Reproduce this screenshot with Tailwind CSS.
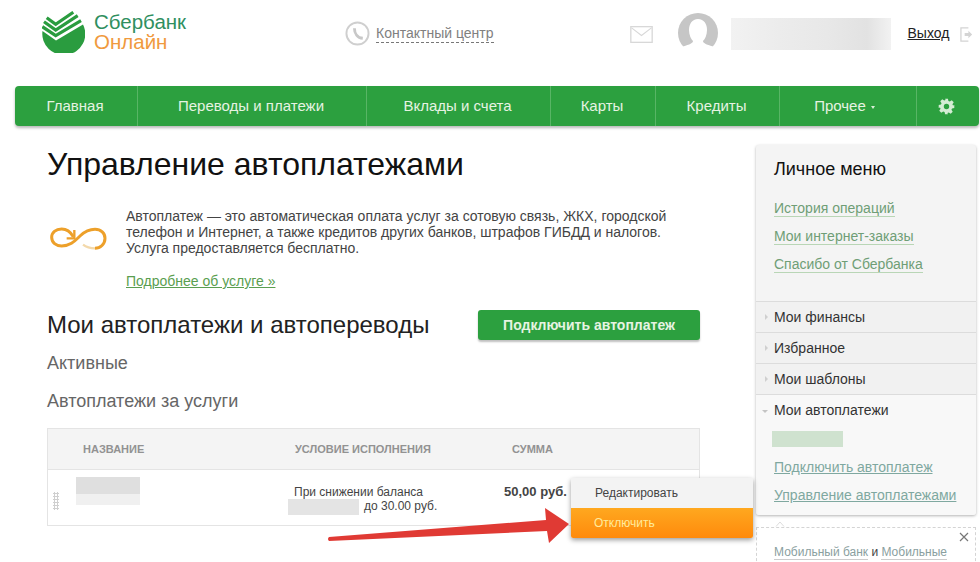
<!DOCTYPE html>
<html lang="ru"><head><meta charset="utf-8"><script src="https://cdn.jsdelivr.net/npm/@tailwindcss/browser@4"></script></head>
<body class="bg-white overflow-hidden font-['Liberation_Sans',sans-serif]">
<div class="relative w-[980px] h-[562px] overflow-hidden">
  <header class="h-[86px] flex items-start">
    <div class="w-[43px] h-[42px] ml-[42px] mt-[11px] shrink-0">
      <svg viewBox="0 0 43 42" class="w-[43px] h-[42px]">
        <path d="M0.5 20 L14 29.5 L41 13.5 A21.5 21 0 1 1 0.5 20 Z" fill="#2a9c3f"/>
        <path d="M4.7 6.7 L13.7 13.3 L31.3 1.3" fill="none" stroke="#2a9c3f" stroke-width="3.2"/>
        <path d="M2 10.7 L13.7 19 L35.7 4.7" fill="none" stroke="#2a9c3f" stroke-width="3.2"/>
        <path d="M0.3 15.7 L13.7 24.7 L39 9.7" fill="none" stroke="#2a9c3f" stroke-width="3.2"/>
      </svg>
    </div>
    <div class="ml-[9px] mt-[12px] w-[100px] text-[20.5px] leading-[19.5px] shrink-0">
      <div class="text-[#2f8f5f]">Сбербанк</div><div class="text-[#f09a3e]">Онлайн</div>
    </div>
    <svg viewBox="0 0 26 26" class="w-[25px] h-[25px] ml-[151px] mt-[21px] shrink-0"><circle cx="13" cy="13" r="11.5" fill="none" stroke="#cfcfcf" stroke-width="2"/><path d="M9.8 7.5 C9.8 13 13 17.5 18.5 18" fill="none" stroke="#c8c8c8" stroke-width="3"/></svg>
    <a class="ml-[6px] mt-[25px] text-[14px] leading-[17px] text-[#808080] border-b border-dashed border-[#777] shrink-0">Контактный центр</a>
    <svg viewBox="0 0 24 18" class="w-[23px] h-[17px] ml-[136px] mt-[26px] shrink-0"><rect x="0.7" y="0.7" width="22.6" height="16.6" fill="none" stroke="#d8d8d8" stroke-width="1.4"/><path d="M1.5 2 L12 10 L22.5 2" fill="none" stroke="#d8d8d8" stroke-width="1.2"/></svg>
    <svg viewBox="0 0 40 40" class="w-[40px] h-[40px] ml-[25px] mt-[13px] shrink-0"><circle cx="20" cy="20" r="20" fill="#c6c6c6"/><path d="M20 6 C26 6 29 11 29 17 C29 22 27 26 25 28 C25 30 28 31.5 35 33.5 L35 42 L5 42 L5 33.5 C12 31.5 15 30 15 28 C13 26 11 22 11 17 C11 11 14 6 20 6 Z" fill="#fff"/></svg>
    <div class="w-[160px] h-[32px] ml-[13px] mt-[18px] bg-[linear-gradient(90deg,#f2f2f2,#ececec_30%,#e8e8e8_60%,#e2e2e2_85%,#f2f2f2)] shrink-0"></div>
    <a class="ml-[17px] mt-[25px] text-[14px] leading-[16px] text-[#222] underline shrink-0">Выход</a>
    <svg viewBox="0 0 15 16" class="w-[14px] h-[15px] ml-[11px] mt-[27px] shrink-0"><path d="M9 1 H1 V15 H9" fill="none" stroke="#d4d4d4" stroke-width="1.4"/><path d="M5 6.5 H9 V4 L13 8 L9 12 V9.5 H5 Z" fill="#d4d4d4"/></svg>
  </header>

  <nav class="ml-[15px] w-[964px] h-[40px] flex rounded-[4px] bg-[#2ca03f] text-[15px] text-[#e6f3e2] shadow-[0_2px_3px_rgba(0,0,0,0.28)] leading-[39px] text-center">
    <div class="w-[123px] border-r border-[#58b565] pr-[2px]">Главная</div>
    <div class="w-[229px] border-r border-[#58b565] pr-[2px]">Переводы и платежи</div>
    <div class="w-[184px] border-r border-[#58b565] pr-[2px]">Вклады и счета</div>
    <div class="w-[105px] border-r border-[#58b565] pr-[2px]">Карты</div>
    <div class="w-[124px] border-r border-[#58b565] pr-[2px]">Кредиты</div>
    <div class="w-[137px] border-r border-[#58b565] flex items-center justify-center gap-[5px] pr-[7px]"><span class="leading-[38px]">Прочее</span><span class="w-0 h-0 mt-[2px] border-x-[2.5px] border-t-[3px] border-x-transparent border-t-[#d8eed8]"></span></div>
    <div class="flex-1 flex items-center justify-center pr-[4px]">
      <svg viewBox="0 0 24 24" class="w-[17px] h-[17px]"><path fill="#d4edd4" fill-rule="evenodd" d="M10 1h4l.7 3.2 1.9.8 2.8-1.8 2.8 2.8-1.8 2.8.8 1.9L23 10v4l-3.2.7-.8 1.9 1.8 2.8-2.8 2.8-2.8-1.8-1.9.8L14 23h-4l-.7-3.2-1.9-.8-2.8 1.8-2.8-2.8 1.8-2.8-.8-1.9L1 14v-4l3.2-.7.8-1.9-1.8-2.8 2.8-2.8 2.8 1.8 1.9-.8zM12 8.2a3.8 3.8 0 1 0 0 7.6 3.8 3.8 0 0 0 0-7.6z"/></svg>
    </div>
  </nav>

  <div class="flex mt-[20px]">
    <main class="ml-[47px] w-[653px] shrink-0">
      <h1 class="text-[32px] leading-[36px] text-[#111]">Управление автоплатежами</h1>
      <div class="flex mt-[23px]">
        <svg viewBox="0 0 198 120" class="w-[66px] h-[40px] ml-[-2px] mt-[15px] shrink-0">
          <path d="M85 50 C75 33 62 27 50 27 C32 27 20 38 20 52 C20 68 33 78 50 78 C78 78 92 60 105 48 C118 36 132 28 150 28 C168 28 180 40 180 55 C180 72 166 85 150 85" fill="none" stroke="#eda02a" stroke-width="9"/>
          <path d="M150 85 C135 85 122 80 114 74" fill="none" stroke="#f3d9ab" stroke-width="7"/>
          <path d="M88 30 V55 H65" fill="none" stroke="#eda02a" stroke-width="7"/>
        </svg>
        <div class="ml-[15px] pt-[3px]">
          <p class="w-[560px] text-[14px] leading-[16px] text-[#444] whitespace-nowrap">Автоплатеж — это автоматическая оплата услуг за сотовую связь, ЖКХ, городской<br>телефон и Интернет, а также кредитов других банков, штрафов ГИБДД и налогов.<br>Услуга предоставляется бесплатно.</p>
          <a class="block mt-[17px] text-[14px] leading-[16px] text-[#5a9e50] underline">Подробнее об услуге »</a>
        </div>
      </div>
      <div class="flex items-start justify-between mt-[19px]">
        <h2 class="text-[24px] leading-[30px] text-[#222] mt-[2px]">Мои автоплатежи и автопереводы</h2>
        <button class="w-[222px] h-[30px] mt-[2px] rounded-[3px] bg-[#2ca03f] text-[14px] font-bold text-[#e6f3e2] shadow-[0_2px_2px_rgba(0,0,0,0.25)]">Подключить автоплатеж</button>
      </div>
      <div class="text-[18px] leading-[22px] text-[#666] mt-[12px]">Активные</div>
      <div class="text-[18px] leading-[22px] text-[#666] mt-[16px]">Автоплатежи за услуги</div>
      <div class="mt-[16px] border border-[#e4e4e4]">
        <div class="h-[41px] bg-[#f4f4f4] border-b border-[#e4e4e4] flex items-center text-[11px] font-bold text-[#929292]">
          <span class="ml-[35px] w-[212px]">НАЗВАНИЕ</span><span class="w-[217px]">УСЛОВИЕ ИСПОЛНЕНИЯ</span><span>СУММА</span>
        </div>
        <div class="h-[55px] flex relative">
          <div class="w-[6px] h-[18px] ml-[5px] mt-[22px] bg-[radial-gradient(#cfcfcf_1px,transparent_1.2px)] bg-[length:3px_3px] shrink-0"></div>
          <div class="w-[64px] h-[28px] ml-[17px] mt-[7px] bg-[linear-gradient(#dfdfdf_60%,#f0f0f0_60%)] shrink-0"></div>
          <div class="ml-[154px] mt-[15px] text-[12px] leading-[14px] text-[#444] w-[190px] shrink-0 whitespace-nowrap">При снижении баланса<br><span class="ml-[70px]">до 30.00 руб.</span></div>
          <div class="absolute left-[240px] top-[29px] w-[71px] h-[16px] bg-[#e4e4e4]"></div>
          <div class="mt-[14px] ml-[20px] text-[13px] leading-[16px] font-bold text-[#444] whitespace-nowrap">50,00 руб.</div>
        </div>
      </div>
    </main>

    <aside class="ml-[56px] w-[220px] shrink-0 mt-[-1px]">
      <div class="rounded-[3px] bg-[#f4f4f4] shadow-[0_1px_3px_rgba(0,0,0,0.3)]">
        <div class="h-[156px] pl-[18px] pt-[14px]">
          <div class="text-[18px] leading-[20px] text-[#111]">Личное меню</div>
          <div class="mt-[21px] flex flex-col items-start gap-[11px] text-[14px] leading-[16px] text-[#6f9e76] [&>a]:border-b [&>a]:border-[#b9d6b6]">
            <a>История операций</a><a>Мои интернет-заказы</a><a>Спасибо от Сбербанка</a>
          </div>
        </div>
        <div class="h-[31px] border-t border-[#dcdcdc] bg-[#f1f1f1] flex items-center text-[14px] text-[#333]"><span class="w-0 h-0 ml-[9px] mr-[6px] border-y-[3px] border-l-[3px] border-y-transparent border-l-[#cfcfcf]"></span>Мои финансы</div>
        <div class="h-[31px] border-t border-[#dcdcdc] bg-[#f1f1f1] flex items-center text-[14px] text-[#333]"><span class="w-0 h-0 ml-[9px] mr-[6px] border-y-[3px] border-l-[3px] border-y-transparent border-l-[#cfcfcf]"></span>Избранное</div>
        <div class="h-[31px] border-t border-[#dcdcdc] bg-[#f1f1f1] flex items-center text-[14px] text-[#333]"><span class="w-0 h-0 ml-[9px] mr-[6px] border-y-[3px] border-l-[3px] border-y-transparent border-l-[#cfcfcf]"></span>Мои шаблоны</div>
        <div class="h-[121px] border-t border-[#dcdcdc] bg-[#f8f8f8] rounded-b-[3px]">
          <div class="h-[30px] flex items-center text-[14px] text-[#333]"><span class="w-0 h-0 ml-[6px] mr-[6px] mt-[2px] border-x-[3px] border-t-[3px] border-x-transparent border-t-[#c4c4c4]"></span>Мои автоплатежи</div>
          <div class="w-[71px] h-[16px] ml-[16px] mt-[6px] bg-[#cfe2cf]"></div>
          <div class="ml-[18px] mt-[12px] flex flex-col items-start gap-[12px] text-[14px] leading-[16px] text-[#7fa8a0] [&>a]:underline">
            <a>Подключить автоплатеж</a><a>Управление автоплатежами</a>
          </div>
        </div>
      </div>
      <div class="relative mt-[12px] h-[60px] border border-dashed border-[#d4d4d4] pl-[17px] pt-[16px] text-[12px] leading-[16px] text-[#444] whitespace-nowrap">
        <svg viewBox="0 0 10 6" class="absolute left-[18px] top-[-7px] w-[10px] h-[6px]"><path d="M1 5.5 L5 1 L9 5.5" fill="none" stroke="#ddd"/></svg>
        <a class="text-[#8aa0a0] border-b border-[#ccc]">Мобильный банк</a> и <a class="text-[#8aa0a0] border-b border-[#ccc]">Мобильные</a>
        <svg viewBox="0 0 10 10" class="absolute right-[6px] top-[4px] w-[10px] h-[10px]"><path d="M1 1 L9 9 M9 1 L1 9" stroke="#777" stroke-width="1.2"/></svg>
      </div>
    </aside>
  </div>

  <div class="absolute left-[571px] top-[478px] w-[182px] rounded-[2px] shadow-[0_2px_5px_rgba(0,0,0,0.4)] text-[12px]">
    <div class="h-[30px] bg-[#f3f3f3] pl-[24px] leading-[30px] text-[#444]">Редактировать</div>
    <div class="h-[30px] bg-[linear-gradient(#ffa81f,#ff8a0c)] pl-[23px] leading-[30px] text-[#ffeb9c] rounded-b-[2px]">Отключить</div>
  </div>
  <svg class="absolute left-[325px] top-[505px] w-[245px] h-[40px]" viewBox="0 0 245 40"><path d="M4 32 L221 15 L220 3 L244 19 L224 38 L222 26 L4 36 Q2 34 4 32 Z" fill="#e03a34"/></svg>
</div>
</body></html>
